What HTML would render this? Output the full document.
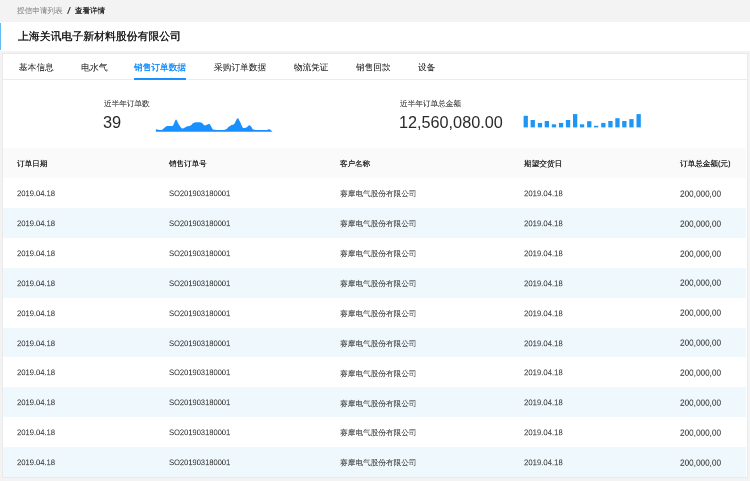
<!DOCTYPE html>
<html><head><meta charset="utf-8">
<style>
*{margin:0;padding:0;box-sizing:border-box;}
html,body{width:750px;height:481px;overflow:hidden;background:#f3f3f3;font-family:"Liberation Sans",sans-serif;color:#333;}
.t{position:absolute;white-space:nowrap;line-height:1;transform-origin:0 0;will-change:transform;}
#hdr{position:absolute;left:0;top:22px;width:750px;height:28.5px;background:#fff;}
#hdr .bar{position:absolute;left:0;top:0.5px;width:1.2px;height:27.5px;background:#62bdf7;}
#card{position:absolute;left:2px;top:53px;width:745.5px;height:424.5px;background:#fff;border:1px solid #eaeaea;}
#ul{position:absolute;left:134.1px;top:78.3px;width:52.3px;height:1.7px;background:#1890ff;}
#sepl{position:absolute;left:3px;top:79px;width:743.5px;height:1px;background:#ececec;}
#th{position:absolute;left:3px;top:148px;width:743px;height:30px;background:#fafafa;}
.row{position:absolute;left:3px;width:743px;height:29.9px;}
.row.alt{background:#eff9fd;}
</style></head><body>
<div id="hdr"><div class="bar"></div></div>
<div id="card"></div>
<div id="sepl"></div>
<div id="ul"></div>
<div id="th"></div>
<div class="row" style="top:178.00px"></div>
<div class="row alt" style="top:207.90px"></div>
<div class="row" style="top:237.80px"></div>
<div class="row alt" style="top:267.70px"></div>
<div class="row" style="top:297.60px"></div>
<div class="row alt" style="top:327.50px"></div>
<div class="row" style="top:357.40px"></div>
<div class="row alt" style="top:387.30px"></div>
<div class="row" style="top:417.20px"></div>
<div class="row alt" style="top:447.10px"></div>
<div class="t" style="left:16.52px;top:190.06px;font-size:16px;font-weight:400;color:#505050;transform:scale(0.4746,0.4746);-webkit-text-stroke:0.3px #505050">2019.04.18</div><div class="t" style="left:168.52px;top:190.06px;font-size:16px;font-weight:400;color:#505050;transform:scale(0.4712,0.4712);-webkit-text-stroke:0.3px #505050">SO201903180001</div><div class="t" style="left:340.11px;top:190.22px;font-size:16px;font-weight:400;color:#505050;transform:scale(0.4783,0.4783);-webkit-text-stroke:0.3px #505050">赛摩电气股份有限公司</div><div class="t" style="left:523.61px;top:190.04px;font-size:16px;font-weight:400;color:#505050;transform:scale(0.4835,0.4835);-webkit-text-stroke:0.3px #505050">2019.04.18</div><div class="t" style="left:679.59px;top:189.77px;font-size:16px;font-weight:400;color:#505050;transform:scale(0.5127,0.5127);-webkit-text-stroke:0.3px #505050">200,000,00</div>
<div class="t" style="left:16.52px;top:219.96px;font-size:16px;font-weight:400;color:#505050;transform:scale(0.4746,0.4746);-webkit-text-stroke:0.3px #505050">2019.04.18</div><div class="t" style="left:168.52px;top:219.96px;font-size:16px;font-weight:400;color:#505050;transform:scale(0.4712,0.4712);-webkit-text-stroke:0.3px #505050">SO201903180001</div><div class="t" style="left:340.11px;top:220.12px;font-size:16px;font-weight:400;color:#505050;transform:scale(0.4783,0.4783);-webkit-text-stroke:0.3px #505050">赛摩电气股份有限公司</div><div class="t" style="left:523.61px;top:219.94px;font-size:16px;font-weight:400;color:#505050;transform:scale(0.4835,0.4835);-webkit-text-stroke:0.3px #505050">2019.04.18</div><div class="t" style="left:679.59px;top:219.67px;font-size:16px;font-weight:400;color:#505050;transform:scale(0.5127,0.5127);-webkit-text-stroke:0.3px #505050">200,000,00</div>
<div class="t" style="left:16.52px;top:249.86px;font-size:16px;font-weight:400;color:#505050;transform:scale(0.4746,0.4746);-webkit-text-stroke:0.3px #505050">2019.04.18</div><div class="t" style="left:168.52px;top:249.86px;font-size:16px;font-weight:400;color:#505050;transform:scale(0.4712,0.4712);-webkit-text-stroke:0.3px #505050">SO201903180001</div><div class="t" style="left:340.11px;top:250.02px;font-size:16px;font-weight:400;color:#505050;transform:scale(0.4783,0.4783);-webkit-text-stroke:0.3px #505050">赛摩电气股份有限公司</div><div class="t" style="left:523.61px;top:249.84px;font-size:16px;font-weight:400;color:#505050;transform:scale(0.4835,0.4835);-webkit-text-stroke:0.3px #505050">2019.04.18</div><div class="t" style="left:679.59px;top:249.57px;font-size:16px;font-weight:400;color:#505050;transform:scale(0.5127,0.5127);-webkit-text-stroke:0.3px #505050">200,000,00</div>
<div class="t" style="left:16.52px;top:279.76px;font-size:16px;font-weight:400;color:#505050;transform:scale(0.4746,0.4746);-webkit-text-stroke:0.3px #505050">2019.04.18</div><div class="t" style="left:168.52px;top:279.76px;font-size:16px;font-weight:400;color:#505050;transform:scale(0.4712,0.4712);-webkit-text-stroke:0.3px #505050">SO201903180001</div><div class="t" style="left:340.11px;top:279.92px;font-size:16px;font-weight:400;color:#505050;transform:scale(0.4783,0.4783);-webkit-text-stroke:0.3px #505050">赛摩电气股份有限公司</div><div class="t" style="left:523.61px;top:279.74px;font-size:16px;font-weight:400;color:#505050;transform:scale(0.4835,0.4835);-webkit-text-stroke:0.3px #505050">2019.04.18</div><div class="t" style="left:679.59px;top:279.47px;font-size:16px;font-weight:400;color:#505050;transform:scale(0.5127,0.5127);-webkit-text-stroke:0.3px #505050">200,000,00</div>
<div class="t" style="left:16.52px;top:309.66px;font-size:16px;font-weight:400;color:#505050;transform:scale(0.4746,0.4746);-webkit-text-stroke:0.3px #505050">2019.04.18</div><div class="t" style="left:168.52px;top:309.66px;font-size:16px;font-weight:400;color:#505050;transform:scale(0.4712,0.4712);-webkit-text-stroke:0.3px #505050">SO201903180001</div><div class="t" style="left:340.11px;top:309.82px;font-size:16px;font-weight:400;color:#505050;transform:scale(0.4783,0.4783);-webkit-text-stroke:0.3px #505050">赛摩电气股份有限公司</div><div class="t" style="left:523.61px;top:309.64px;font-size:16px;font-weight:400;color:#505050;transform:scale(0.4835,0.4835);-webkit-text-stroke:0.3px #505050">2019.04.18</div><div class="t" style="left:679.59px;top:309.37px;font-size:16px;font-weight:400;color:#505050;transform:scale(0.5127,0.5127);-webkit-text-stroke:0.3px #505050">200,000,00</div>
<div class="t" style="left:16.52px;top:339.56px;font-size:16px;font-weight:400;color:#505050;transform:scale(0.4746,0.4746);-webkit-text-stroke:0.3px #505050">2019.04.18</div><div class="t" style="left:168.52px;top:339.56px;font-size:16px;font-weight:400;color:#505050;transform:scale(0.4712,0.4712);-webkit-text-stroke:0.3px #505050">SO201903180001</div><div class="t" style="left:340.11px;top:339.72px;font-size:16px;font-weight:400;color:#505050;transform:scale(0.4783,0.4783);-webkit-text-stroke:0.3px #505050">赛摩电气股份有限公司</div><div class="t" style="left:523.61px;top:339.54px;font-size:16px;font-weight:400;color:#505050;transform:scale(0.4835,0.4835);-webkit-text-stroke:0.3px #505050">2019.04.18</div><div class="t" style="left:679.59px;top:339.27px;font-size:16px;font-weight:400;color:#505050;transform:scale(0.5127,0.5127);-webkit-text-stroke:0.3px #505050">200,000,00</div>
<div class="t" style="left:16.52px;top:369.46px;font-size:16px;font-weight:400;color:#505050;transform:scale(0.4746,0.4746);-webkit-text-stroke:0.3px #505050">2019.04.18</div><div class="t" style="left:168.52px;top:369.46px;font-size:16px;font-weight:400;color:#505050;transform:scale(0.4712,0.4712);-webkit-text-stroke:0.3px #505050">SO201903180001</div><div class="t" style="left:340.11px;top:369.62px;font-size:16px;font-weight:400;color:#505050;transform:scale(0.4783,0.4783);-webkit-text-stroke:0.3px #505050">赛摩电气股份有限公司</div><div class="t" style="left:523.61px;top:369.44px;font-size:16px;font-weight:400;color:#505050;transform:scale(0.4835,0.4835);-webkit-text-stroke:0.3px #505050">2019.04.18</div><div class="t" style="left:679.59px;top:369.17px;font-size:16px;font-weight:400;color:#505050;transform:scale(0.5127,0.5127);-webkit-text-stroke:0.3px #505050">200,000,00</div>
<div class="t" style="left:16.52px;top:399.36px;font-size:16px;font-weight:400;color:#505050;transform:scale(0.4746,0.4746);-webkit-text-stroke:0.3px #505050">2019.04.18</div><div class="t" style="left:168.52px;top:399.36px;font-size:16px;font-weight:400;color:#505050;transform:scale(0.4712,0.4712);-webkit-text-stroke:0.3px #505050">SO201903180001</div><div class="t" style="left:340.11px;top:399.52px;font-size:16px;font-weight:400;color:#505050;transform:scale(0.4783,0.4783);-webkit-text-stroke:0.3px #505050">赛摩电气股份有限公司</div><div class="t" style="left:523.61px;top:399.34px;font-size:16px;font-weight:400;color:#505050;transform:scale(0.4835,0.4835);-webkit-text-stroke:0.3px #505050">2019.04.18</div><div class="t" style="left:679.59px;top:399.07px;font-size:16px;font-weight:400;color:#505050;transform:scale(0.5127,0.5127);-webkit-text-stroke:0.3px #505050">200,000,00</div>
<div class="t" style="left:16.52px;top:429.26px;font-size:16px;font-weight:400;color:#505050;transform:scale(0.4746,0.4746);-webkit-text-stroke:0.3px #505050">2019.04.18</div><div class="t" style="left:168.52px;top:429.26px;font-size:16px;font-weight:400;color:#505050;transform:scale(0.4712,0.4712);-webkit-text-stroke:0.3px #505050">SO201903180001</div><div class="t" style="left:340.11px;top:429.42px;font-size:16px;font-weight:400;color:#505050;transform:scale(0.4783,0.4783);-webkit-text-stroke:0.3px #505050">赛摩电气股份有限公司</div><div class="t" style="left:523.61px;top:429.24px;font-size:16px;font-weight:400;color:#505050;transform:scale(0.4835,0.4835);-webkit-text-stroke:0.3px #505050">2019.04.18</div><div class="t" style="left:679.59px;top:428.97px;font-size:16px;font-weight:400;color:#505050;transform:scale(0.5127,0.5127);-webkit-text-stroke:0.3px #505050">200,000,00</div>
<div class="t" style="left:16.52px;top:459.16px;font-size:16px;font-weight:400;color:#505050;transform:scale(0.4746,0.4746);-webkit-text-stroke:0.3px #505050">2019.04.18</div><div class="t" style="left:168.52px;top:459.16px;font-size:16px;font-weight:400;color:#505050;transform:scale(0.4712,0.4712);-webkit-text-stroke:0.3px #505050">SO201903180001</div><div class="t" style="left:340.11px;top:459.32px;font-size:16px;font-weight:400;color:#505050;transform:scale(0.4783,0.4783);-webkit-text-stroke:0.3px #505050">赛摩电气股份有限公司</div><div class="t" style="left:523.61px;top:459.14px;font-size:16px;font-weight:400;color:#505050;transform:scale(0.4835,0.4835);-webkit-text-stroke:0.3px #505050">2019.04.18</div><div class="t" style="left:679.59px;top:458.87px;font-size:16px;font-weight:400;color:#505050;transform:scale(0.5127,0.5127);-webkit-text-stroke:0.3px #505050">200,000,00</div>

<svg style="position:absolute;left:0;top:0" width="750" height="481">
<path fill="#1890ff" d="M155.9,131.75 L155.9,129.3 C156.37,129.38 157.67,129.72 158.70,129.80 C159.73,129.88 160.80,130.38 162.10,129.80 C163.40,129.22 164.90,126.93 166.50,126.30 C168.10,125.67 170.55,126.22 171.70,126.00 C172.85,125.78 172.68,126.07 173.40,125.00 C174.12,123.93 175.13,119.75 176.00,119.60 C176.87,119.45 177.58,122.62 178.60,124.10 C179.62,125.58 180.65,128.13 182.10,128.50 C183.55,128.87 185.87,126.82 187.30,126.30 C188.73,125.78 189.48,126.02 190.70,125.40 C191.92,124.78 192.87,123.07 194.60,122.60 C196.33,122.13 199.43,122.13 201.10,122.60 C202.77,123.07 203.22,125.15 204.60,125.40 C205.98,125.65 208.17,123.67 209.40,124.10 C210.63,124.53 211.18,127.05 212.00,128.00 C212.82,128.95 212.18,129.50 214.30,129.80 C216.42,130.10 222.38,130.23 224.70,129.80 C227.02,129.37 227.18,127.93 228.20,127.20 C229.22,126.47 229.93,125.83 230.80,125.40 C231.67,124.97 232.68,125.10 233.40,124.60 C234.12,124.10 234.40,123.47 235.10,122.40 C235.80,121.33 236.80,118.35 237.60,118.20 C238.40,118.05 239.08,120.00 239.90,121.50 C240.72,123.00 241.70,126.12 242.50,127.20 C243.30,128.28 243.98,128.00 244.70,128.00 C245.42,128.00 246.02,127.67 246.80,127.20 C247.58,126.73 248.60,125.20 249.40,125.20 C250.20,125.20 250.80,126.43 251.60,127.20 C252.40,127.97 251.88,129.33 254.20,129.80 C256.52,130.27 262.97,130.10 265.50,130.00 C268.03,129.90 268.22,128.91 269.40,129.20 C270.58,129.49 272.07,131.32 272.60,131.75 L272.6,131.75 Z"/>
<g fill="#1e96f6"><rect x="523.6" y="115.8" width="4.3" height="11.6"/><rect x="530.6" y="120" width="4.3" height="7.4"/><rect x="537.8" y="122.9" width="4.3" height="4.5"/><rect x="544.7" y="121" width="4.3" height="6.4"/><rect x="551.8" y="124.3" width="4.3" height="3.1"/><rect x="558.9" y="122.9" width="4.3" height="4.5"/><rect x="565.9" y="120" width="4.3" height="7.4"/><rect x="573" y="114.1" width="4.3" height="13.3"/><rect x="579.9" y="124.3" width="4.3" height="3.1"/><rect x="587.1" y="121.2" width="4.3" height="6.2"/><rect x="594" y="125.8" width="4.3" height="1.6"/><rect x="601.2" y="122.9" width="4.3" height="4.5"/><rect x="608.3" y="121" width="4.3" height="6.4"/><rect x="615.3" y="118.2" width="4.3" height="9.2"/><rect x="622.2" y="121" width="4.3" height="6.4"/><rect x="629.3" y="119.1" width="4.3" height="8.3"/><rect x="636.5" y="114.1" width="4.3" height="13.3"/></g>
</svg>
<div class="t" style="left:16.70px;top:6.74px;font-size:16px;font-weight:400;color:#999;transform:scale(0.4758,0.4758);-webkit-text-stroke:0.35px #999">授信申请列表</div>
<div class="t" style="left:66.90px;top:6.91px;font-size:9px;font-weight:400;color:#333;transform:scale(1.5354,0.9808)">/</div>
<div class="t" style="left:75.20px;top:7.18px;font-size:16px;font-weight:700;color:#333;transform:scale(0.4702,0.4702)">查看详情</div>
<div class="t" style="left:17.66px;top:31.30px;font-size:22px;font-weight:400;color:#1a1a1a;transform:scale(0.4941,0.4941);-webkit-text-stroke:0.7px #1a1a1a">上海关讯电子新材料股份有限公司</div>
<div class="t" style="left:18.68px;top:62.72px;font-size:18px;font-weight:400;color:#3a3a3a;transform:scale(0.4812,0.4812);-webkit-text-stroke:0.25px #3a3a3a">基本信息</div>
<div class="t" style="left:80.73px;top:62.66px;font-size:18px;font-weight:400;color:#3a3a3a;transform:scale(0.4947,0.4947);-webkit-text-stroke:0.25px #3a3a3a">电水气</div>
<div class="t" style="left:134.40px;top:62.73px;font-size:18px;font-weight:400;color:#1890ff;transform:scale(0.4808,0.4808);-webkit-text-stroke:0.7px #1890ff">销售订单数据</div>
<div class="t" style="left:214.18px;top:63.01px;font-size:18px;font-weight:400;color:#3a3a3a;transform:scale(0.4828,0.4828);-webkit-text-stroke:0.25px #3a3a3a">采购订单数据</div>
<div class="t" style="left:294.00px;top:62.82px;font-size:18px;font-weight:400;color:#3a3a3a;transform:scale(0.4767,0.4767);-webkit-text-stroke:0.25px #3a3a3a">物流凭证</div>
<div class="t" style="left:356.00px;top:62.68px;font-size:18px;font-weight:400;color:#3a3a3a;transform:scale(0.4795,0.4795);-webkit-text-stroke:0.25px #3a3a3a">销售回款</div>
<div class="t" style="left:418.29px;top:62.77px;font-size:18px;font-weight:400;color:#3a3a3a;transform:scale(0.4817,0.4817);-webkit-text-stroke:0.25px #3a3a3a">设备</div>
<div class="t" style="left:103.72px;top:99.70px;font-size:16px;font-weight:400;color:#555;transform:scale(0.4747,0.4747);-webkit-text-stroke:0.35px #555">近半年订单数</div>
<div class="t" style="left:399.61px;top:99.73px;font-size:16px;font-weight:400;color:#555;transform:scale(0.4764,0.4764);-webkit-text-stroke:0.35px #555">近半年订单总金额</div>
<div class="t" style="left:103.39px;top:114.95px;font-size:16px;font-weight:400;color:#2a2a2a;transform:scale(1.0244,1.0244)">39</div>
<div class="t" style="left:398.98px;top:114.87px;font-size:16px;font-weight:400;color:#2a2a2a;transform:scale(1.0139,1.0139)">12,560,080.00</div>
<div class="t" style="left:17.09px;top:159.95px;font-size:16px;font-weight:700;color:#333;transform:scale(0.4747,0.4747)">订单日期</div>
<div class="t" style="left:169.19px;top:159.98px;font-size:16px;font-weight:700;color:#333;transform:scale(0.4712,0.4712)">销售订单号</div>
<div class="t" style="left:340.00px;top:160.08px;font-size:16px;font-weight:700;color:#333;transform:scale(0.4702,0.4702)">客户名称</div>
<div class="t" style="left:524.00px;top:159.88px;font-size:16px;font-weight:700;color:#333;transform:scale(0.4780,0.4780)">期望交货日</div>
<div class="t" style="left:680.29px;top:159.81px;font-size:16px;font-weight:700;color:#333;transform:scale(0.4745,0.4745)">订单总金额(元)</div>

</body></html>
